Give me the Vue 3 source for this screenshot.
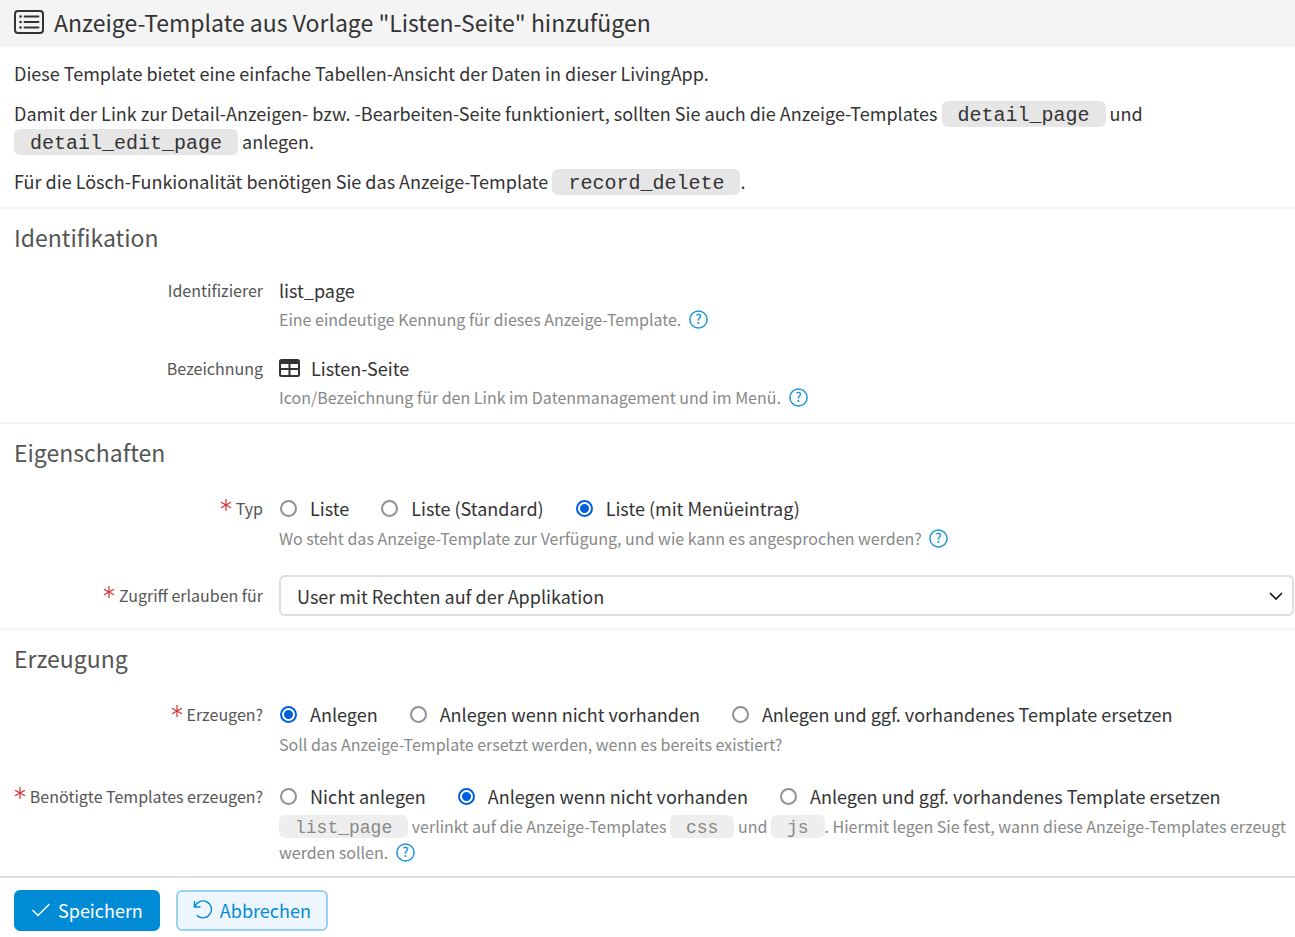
<template>
  <form class="page" @submit.prevent>
    <header class="page-header">
      <svg class="header-icon" viewBox="0 0 30 24" fill="none" stroke="currentColor" aria-hidden="true">
        <rect x="1" y="1" width="28" height="22" rx="3" stroke-width="2" />
        <path d="M10.5 6.5H24.5M10.5 12H24.5M10.5 17.5H24.5" stroke-width="1.8" stroke-linecap="round" />
        <path d="M6.5 6.5H6.6M6.5 12H6.6M6.5 17.5H6.6" stroke-width="2.6" stroke-linecap="round" />
      </svg>
      <h1>Anzeige-Template aus Vorlage "Listen-Seite" hinzufügen</h1>
    </header>

    <div class="intro">
      <p>Diese Template bietet eine einfache Tabellen-Ansicht der Daten in dieser LivingApp.</p>
      <p>
        Damit der Link zur Detail-Anzeigen- bzw. -Bearbeiten-Seite funktioniert, sollten Sie auch die
        Anzeige-Templates <code>detail_page</code> und <code>detail_edit_page</code> anlegen.
      </p>
      <p>Für die Lösch-Funkionalität benötigen Sie das Anzeige-Template <code>record_delete</code>.</p>
    </div>

    <section>
      <h2>Identifikation</h2>
      <div class="field">
        <span class="label">Identifizierer</span>
        <div class="control">
          <div class="static">list_page</div>
          <div class="help">
            Eine eindeutige Kennung für dieses Anzeige-Template.
            <a class="help-link" href="#" aria-label="Hilfe">
              <svg viewBox="0 0 19 19"><circle cx="9.5" cy="9.5" r="8.6" /><text x="9.5" y="14">?</text></svg>
            </a>
          </div>
        </div>
      </div>
      <div class="field">
        <span class="label">Bezeichnung</span>
        <div class="control">
          <div class="static">
            <svg class="table-icon" viewBox="0 0 21 18" aria-hidden="true">
              <path
                fill="currentColor"
                fill-rule="evenodd"
                d="M2.5 0h16A2.5 2.5 0 0 1 21 2.5v13a2.5 2.5 0 0 1-2.5 2.5h-16A2.5 2.5 0 0 1 0 15.5v-13A2.5 2.5 0 0 1 2.5 0zM2 5v4h7.5V5zM11.5 5v4H19V5zM2 11v4.5a.5.5 0 0 0 .5.5h7v-5zM11.5 11v5h7a.5.5 0 0 0 .5-.5V11z"
              />
            </svg>
            Listen-Seite
          </div>
          <div class="help">
            Icon/Bezeichnung für den Link im Datenmanagement und im Menü.
            <a class="help-link" href="#" aria-label="Hilfe">
              <svg viewBox="0 0 19 19"><circle cx="9.5" cy="9.5" r="8.6" /><text x="9.5" y="14">?</text></svg>
            </a>
          </div>
        </div>
      </div>
    </section>

    <section>
      <h2>Eigenschaften</h2>
      <div class="field" role="radiogroup" aria-labelledby="label-type">
        <span id="label-type" class="label required">
          <svg class="star" viewBox="0 0 12 12" aria-hidden="true"><path d="M6 0V12M1 3.2L11 8.8M11 3.2L1 8.8" /></svg>
          Typ
        </span>
        <div class="control">
          <div class="radios">
            <label v-for="o in types" :key="o">
              <input v-model="type" type="radio" name="type" :value="o" />{{ o }}
            </label>
          </div>
          <div class="help">
            Wo steht das Anzeige-Template zur Verfügung, und wie kann es angesprochen werden?
            <a class="help-link" href="#" aria-label="Hilfe">
              <svg viewBox="0 0 19 19"><circle cx="9.5" cy="9.5" r="8.6" /><text x="9.5" y="14">?</text></svg>
            </a>
          </div>
        </div>
      </div>
      <div class="field field-select">
        <label class="label required" for="access">
          <svg class="star" viewBox="0 0 12 12" aria-hidden="true"><path d="M6 0V12M1 3.2L11 8.8M11 3.2L1 8.8" /></svg>
          Zugriff erlauben für
        </label>
        <div class="control select-wrap">
          <select id="access" v-model="access">
            <option>User mit Rechten auf der Applikation</option>
            <option>Alle User</option>
          </select>
          <svg class="chevron" viewBox="0 0 14 8" aria-hidden="true"><path d="M1 1l6 6 6-6" /></svg>
        </div>
      </div>
    </section>

    <section>
      <h2>Erzeugung</h2>
      <div class="field" role="radiogroup" aria-labelledby="label-create">
        <span id="label-create" class="label required">
          <svg class="star" viewBox="0 0 12 12" aria-hidden="true"><path d="M6 0V12M1 3.2L11 8.8M11 3.2L1 8.8" /></svg>
          Erzeugen?
        </span>
        <div class="control">
          <div class="radios">
            <label v-for="o in createOptions" :key="o">
              <input v-model="create" type="radio" name="create" :value="o" />{{ o }}
            </label>
          </div>
          <div class="help">Soll das Anzeige-Template ersetzt werden, wenn es bereits existiert?</div>
        </div>
      </div>
      <div class="field" role="radiogroup" aria-labelledby="label-needed">
        <span id="label-needed" class="label required">
          <svg class="star" viewBox="0 0 12 12" aria-hidden="true"><path d="M6 0V12M1 3.2L11 8.8M11 3.2L1 8.8" /></svg>
          Benötigte Templates erzeugen?
        </span>
        <div class="control">
          <div class="radios">
            <label v-for="o in neededOptions" :key="o">
              <input v-model="needed" type="radio" name="needed" :value="o" />{{ o }}
            </label>
          </div>
          <div class="help">
            <code>list_page</code> verlinkt auf die Anzeige-Templates <code>css</code> und
            <code>js</code>. Hiermit legen Sie fest, wann diese Anzeige-Templates erzeugt werden sollen.
            <a class="help-link" href="#" aria-label="Hilfe">
              <svg viewBox="0 0 19 19"><circle cx="9.5" cy="9.5" r="8.6" /><text x="9.5" y="14">?</text></svg>
            </a>
          </div>
        </div>
      </div>
    </section>

    <footer>
      <button class="btn btn-primary" type="submit">
        <svg viewBox="0 0 20 20" aria-hidden="true"><path d="M1.5 10l5.500 5.500L18.500 4" /></svg>
        Speichern
      </button>
      <button class="btn btn-secondary" type="button">
        <svg viewBox="0 0 20 20" aria-hidden="true"><path d="M1.500 1V7H7.500M1.800 6.800A8.500 8.500 0 1 1 3.800 15.300" /></svg>
        Abbrechen
      </button>
    </footer>
  </form>
</template>

<script setup>
import { ref } from 'vue'

const types = ['Liste', 'Liste (Standard)', 'Liste (mit Menüeintrag)']
const createOptions = [
  'Anlegen',
  'Anlegen wenn nicht vorhanden',
  'Anlegen und ggf. vorhandenes Template ersetzen',
]
const neededOptions = [
  'Nicht anlegen',
  'Anlegen wenn nicht vorhanden',
  'Anlegen und ggf. vorhandenes Template ersetzen',
]

const type = ref('Liste (mit Menüeintrag)')
const access = ref('User mit Rechten auf der Applikation')
const create = ref('Anlegen')
const needed = ref('Anlegen wenn nicht vorhanden')
</script>

<style>
body {
  margin: 0;
  background: #fff;
}
</style>

<style scoped>
.page {
  font-family: "Noto Sans CJK SC", "Open Sans", sans-serif;
  font-size: 18px;
  line-height: 28px;
  color: #333;
}

.page-header {
  display: flex;
  align-items: center;
  gap: 10px;
  padding: 8px 14px 11px;
  background: #f4f4f4;
}
.header-icon {
  width: 30px;
  height: 24px;
}
h1 {
  margin: 0;
  font-size: 23px;
  font-weight: 400;
}

.intro {
  display: flex;
  flex-direction: column;
  gap: 12px;
  padding: 12px 14px;
}
.intro p {
  margin: 0;
}

code {
  padding: 3px 16px 0;
  border-radius: 6px;
  background: #e6e6e6;
  font-family: "Liberation Mono", monospace;
  font-size: 20px;
  line-height: 1;
}

section {
  padding: 12px 1px 12px 14px;
  border-top: 2px solid #f4f4f4;
}
section:last-of-type {
  padding-bottom: 11px;
}
h2 {
  margin: 0 0 23px;
  font-size: 23px;
  font-weight: 400;
  line-height: 32px;
  color: #555;
}

.field {
  display: grid;
  grid-template-columns: 249px minmax(0, 1fr);
  column-gap: 16px;
}
.field + .field {
  margin-top: 22px;
}
.field + .field-select {
  margin-top: 24px;
}
.label {
  font-size: 16px;
  line-height: 28px;
  color: #555;
  text-align: right;
}
.label.required {
  line-height: 34px;
}
.field-select .label {
  line-height: 41px;
}
.star {
  width: 12px;
  height: 12px;
  vertical-align: 4px;
  fill: none;
  stroke: #d03030;
  stroke-width: 1.2;
}

.static {
  display: flex;
  align-items: center;
  gap: 11px;
  padding-bottom: 2px;
}
.table-icon {
  width: 21px;
  height: 18px;
}

.radios {
  display: flex;
  flex-wrap: wrap;
  column-gap: 31px;
  line-height: 34px;
}
.radios label {
  display: flex;
  align-items: center;
}
.radios input {
  appearance: none;
  box-sizing: border-box;
  width: 17px;
  height: 17px;
  margin: 0 13px 0 1px;
  border: 2px solid #8f8f9d;
  border-radius: 50%;
  background: #fff;
}
.radios input:checked {
  border-color: #0060df;
  background: radial-gradient(circle, #0060df 4px, #fff 5px);
}

.help {
  font-size: 16px;
  line-height: 26px;
  color: #888;
}
.help code {
  background: #eee;
  font-size: 18px;
}
.help-link {
  display: inline-block;
  margin-left: 4px;
  line-height: 1;
  text-decoration: none;
  vertical-align: -3px;
}
.help-link svg {
  display: block;
  width: 19px;
  height: 19px;
}
.help-link circle {
  fill: none;
  stroke: #1b95d9;
  stroke-width: 1.5;
}
.help-link text {
  fill: #1b95d9;
  font-size: 13px;
  font-weight: 500;
  text-anchor: middle;
}

.select-wrap {
  position: relative;
}
select {
  display: block;
  appearance: none;
  box-sizing: border-box;
  width: 100%;
  height: 41px;
  padding: 0 40px 0 16px;
  border: 2px solid #ddd;
  border-radius: 6px;
  background: #fff;
  color: #333;
  font: inherit;
}
.chevron {
  position: absolute;
  top: 17px;
  right: 11px;
  width: 14px;
  height: 8px;
  fill: none;
  stroke: #111;
  stroke-width: 1.6;
  pointer-events: none;
}

footer {
  display: flex;
  gap: 16px;
  padding: 12px 14px 6px;
  border-top: 2px solid #ddd;
}
.btn {
  display: flex;
  align-items: center;
  gap: 7px;
  box-sizing: border-box;
  height: 41px;
  padding: 0 15px 2px;
  border: 2px solid #008bd6;
  border-radius: 6px;
  font: inherit;
  cursor: pointer;
}
.btn svg {
  width: 20px;
  height: 20px;
  fill: none;
  stroke: currentColor;
  stroke-width: 1.4;
}
.btn-primary {
  background: #008bd6;
  color: #fff;
}
.btn-secondary {
  border-color: #99d1ef;
  background: #edf6fc;
  color: #008bd6;
}
</style>
